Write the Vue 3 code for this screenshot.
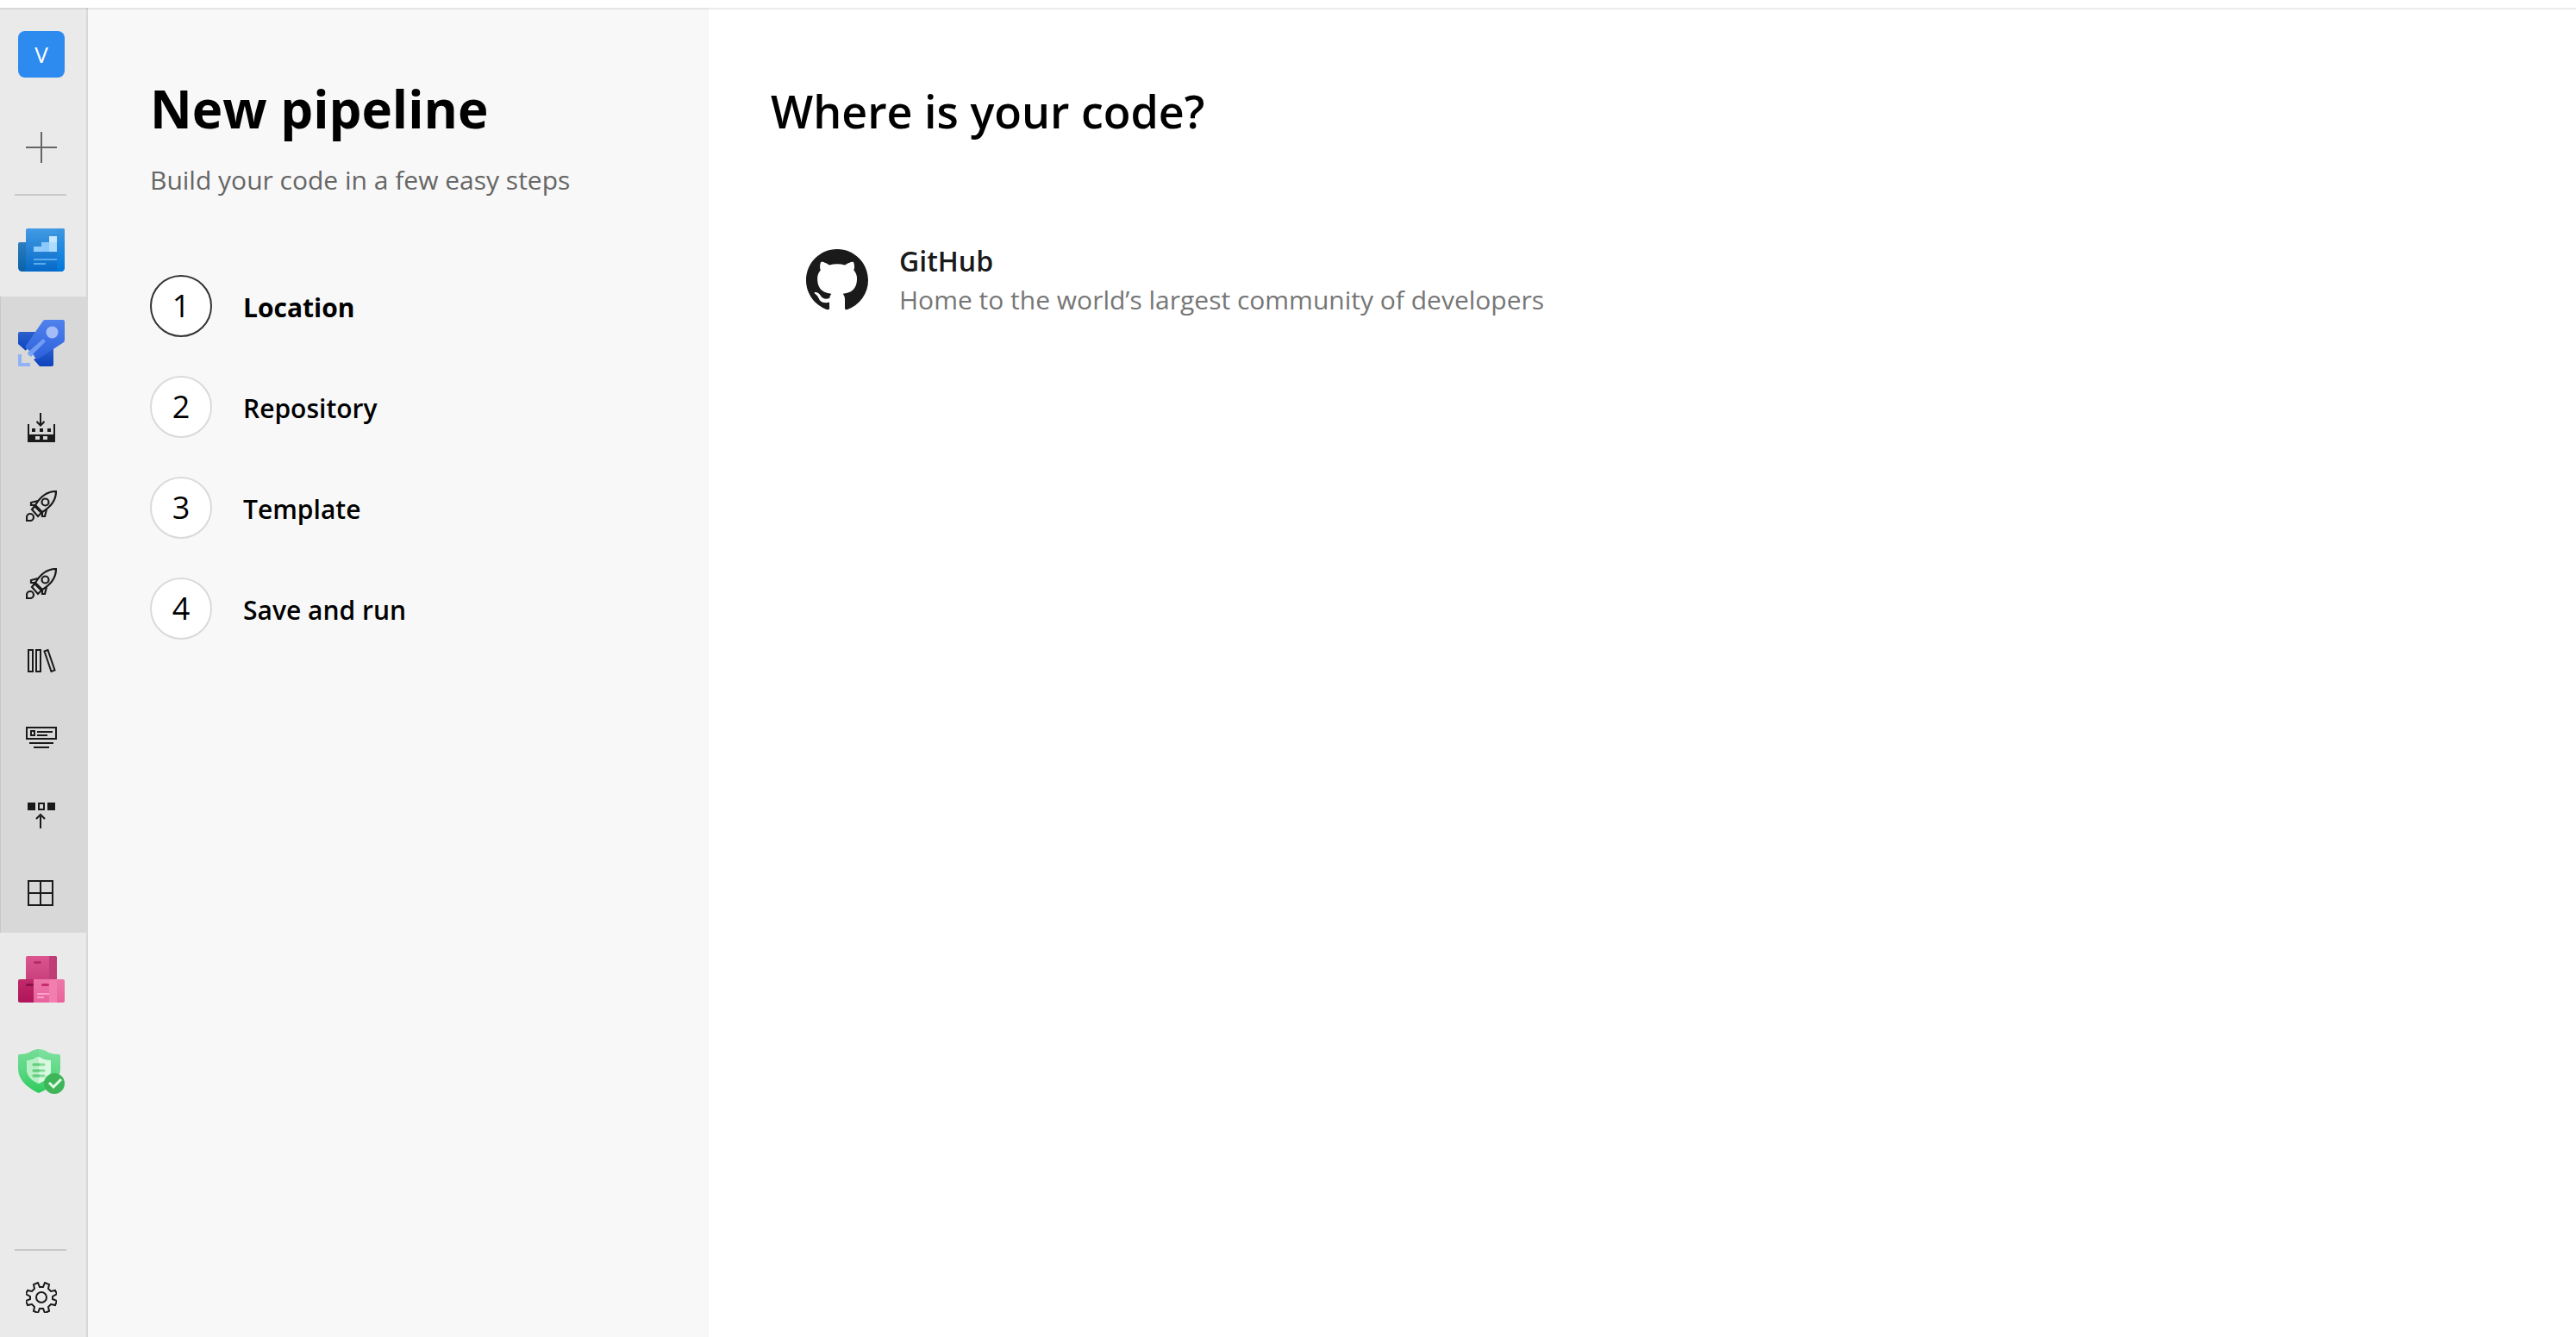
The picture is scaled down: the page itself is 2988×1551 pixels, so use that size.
<script setup>
const steps = ['Location', 'Repository', 'Template', 'Save and run']
const current = 0
</script>

<template>
  <div class="app">
    <header class="topbar"></header>
    <div class="body">
      <nav class="rail" aria-label="Project">
        <a class="item" href="#" aria-label="Project V"><span class="avatar">V</span></a>
        <button class="item" type="button" aria-label="Add">
          <svg width="36" height="36" viewBox="0 0 36 36"><path d="M17 0h2v17h17v2H19v17h-2V19H0v-2h17z" fill="#666" /></svg>
        </button>
        <hr class="rule" />
        <a class="item hub" href="#" aria-label="Boards">
          <svg width="54" height="54" viewBox="0 0 54 54">
            <defs>
              <linearGradient id="b1" x1="0" y1="0" x2="0" y2="1"><stop offset="0" stop-color="#429be4" /><stop offset="1" stop-color="#0669c8" /></linearGradient>
              <linearGradient id="b2" x1="0" y1="0" x2="0" y2="1"><stop offset="0" stop-color="#2d7dc0" /><stop offset="1" stop-color="#0862a8" /></linearGradient>
              <linearGradient id="b3" x1="0" y1="0" x2="0" y2="1"><stop offset="0" stop-color="#3d98e2" /><stop offset="1" stop-color="#0078da" /></linearGradient>
            </defs>
            <path d="M2 18h10v34H5q-5 0-5-5V20q0-2 2-2z" fill="url(#b2)" />
            <path d="M11 2h41q2 0 2 2v43q0 5-5 5H4q5 0 5-5V4q0-2 2-2z" fill="url(#b1)" />
            <path d="M45 2h7q2 0 2 2v43q0 5-4.500 5T45 47z" fill="url(#b3)" />
            <path d="M18 23h9v-5h9v11H18z" fill="#92ccfb" />
            <path d="M27 18h9v11h-9z" fill="#8cc8fa" />
            <path d="M36 11h9v18h-9z" fill="#addbff" />
            <path d="M36 11h9v7h-9z" fill="#c8e6ff" />
            <path d="M18 37h27v2H18zM18 42h14v2H18z" fill="#58acee" />
          </svg>
        </a>
        <div class="group">
          <a class="item" href="#" aria-label="Pipelines">
            <svg width="54" height="54" viewBox="0 0 54 54">
              <defs>
                <linearGradient id="p1" x1="0" y1="0" x2="0" y2="1"><stop offset="0" stop-color="#5082ec" /><stop offset="1" stop-color="#2d61dc" /></linearGradient>
                <linearGradient id="p2" x1="0" y1="0" x2="0" y2="1"><stop offset="0" stop-color="#2c60cc" /><stop offset="1" stop-color="#0c43bd" /></linearGradient>
              </defs>
              <path d="M2 14h20L9 36 0 28V16q0-2 2-2z" fill="url(#p2)" />
              <path d="M41 32v20q0 2-2 2H25l-7-8z" fill="url(#p2)" />
              <path d="M31 0h21q2 0 2 2v21q0 2-1 3L24 45q-2 1-4-1L9 33q-1-1 0-3L29 1q1-1 2-1z" fill="url(#p1)" />
              <path d="M11 34l8 8-3 4-3-3-2-1 1-3-5-2z" fill="#d8d8d8" />
              <path d="M29 22l3 3-17 17-2-2-2-2z" fill="#729cf4" />
              <path d="M11 40l3-3 4 3-3 3z" fill="#7ba3f5" />
              <circle cx="39.500" cy="14.500" r="7" fill="#a4bdf7" />
              <path d="M0 40h4v10h10v4H0z" fill="#92b2f8" />
            </svg>
          </a>
          <a class="item sub" href="#" aria-label="Builds">
            <svg width="36" height="36" viewBox="0 0 36 36" fill="#1a1a1a">
              <path d="M16 0h2v12l3-3 1 2-5 5-5-5 1-2 3 3z" />
              <path fill-rule="evenodd" d="M2 13h2v12h28V13h2v21H2zm9 14v4h5v-4zm9 0v4h5v-4z" />
              <path d="M7 18h4v4H7zM16 18h4v4h-4zM25 18h4v4h-4z" />
            </svg>
          </a>
          <a v-for="label in ['Releases', 'Releases overview']" :key="label" class="item sub" href="#" :aria-label="label">
            <svg width="36" height="36" viewBox="0 0 36 36" fill="none" stroke="#1a1a1a" stroke-width="2.200">
              <path d="M11 17C17 7 24 1 35 1 35 12 29 19 19 25z" />
              <circle cx="22.500" cy="13.500" r="4" />
              <path d="M14 12l-8 2v3h5M24 22l-2 8h-3v-5M11 17l-4 5 7 8 5-5M10 18l8 8" />
              <path d="M1 35v-4a4 4 0 1 1 4 4z" />
            </svg>
          </a>
          <a class="item sub" href="#" aria-label="Library">
            <svg width="36" height="36" viewBox="0 0 36 36" fill="none" stroke="#1a1a1a" stroke-width="2">
              <path d="M3 5h5v25H3zM12 5h5v25h-5zM21.500 6.500l4-1.500 8 23.500-4 1.500z" />
            </svg>
          </a>
          <a class="item sub" href="#" aria-label="Task groups">
            <svg width="36" height="36" viewBox="0 0 36 36" fill="none" stroke="#1a1a1a" stroke-width="2">
              <path d="M1 5h34v13H1zM6 9h4v5H6zM13 10h18M13 14h12M4 23h28M9 28h18" />
            </svg>
          </a>
          <a class="item sub" href="#" aria-label="Deployment groups">
            <svg width="36" height="36" viewBox="0 0 36 36" fill="none" stroke="#1a1a1a" stroke-width="2">
              <path d="M2 2h9v9H2zM25 2h9v9h-9z" fill="#1a1a1a" stroke="none" />
              <path d="M15 3h6v7h-6zM17 32V18M12 21l5-5 5 5" />
            </svg>
          </a>
          <a class="item sub" href="#" aria-label="Dashboards">
            <svg width="36" height="36" viewBox="0 0 36 36" fill="none" stroke="#1a1a1a" stroke-width="2">
              <path d="M3 3h28v28H3zM17 3v28M3 17h28" />
            </svg>
          </a>
        </div>
        <a class="item" href="#" aria-label="Artifacts">
          <svg width="54" height="54" viewBox="0 0 54 54">
            <defs>
              <linearGradient id="a1" x1="0" y1="0" x2="0" y2="1"><stop offset="0" stop-color="#dc5590" /><stop offset="1" stop-color="#c9407d" /></linearGradient>
              <linearGradient id="a2" x1="0" y1="0" x2="0" y2="1"><stop offset="0" stop-color="#c02a6a" /><stop offset="1" stop-color="#b0145a" /></linearGradient>
              <linearGradient id="a3" x1="0" y1="0" x2="0" y2="1"><stop offset="0" stop-color="#ed77a9" /><stop offset="1" stop-color="#e8629c" /></linearGradient>
            </defs>
            <path d="M11 0h32q2 0 2 2v25H9V2q0-2 2-2z" fill="url(#a1)" />
            <path d="M36 0h7q2 0 2 2v25h-9z" fill="#c03c76" />
            <path d="M2 27h16v27H2q-2 0-2-2V29q0-2 2-2z" fill="url(#a2)" />
            <path d="M18 27h34q2 0 2 2v23q0 2-2 2H18z" fill="url(#a3)" />
            <path d="M36 27h9v27h-9z" fill="#f27eb0" />
            <rect x="18" y="6" width="9" height="3" rx="1.500" fill="#b52c68" />
            <rect x="9" y="32" width="9" height="3" rx="1.500" fill="#8e104a" />
            <rect x="27" y="32" width="9" height="3" rx="1.500" fill="#c42f70" />
            <path d="M22 43h14v2H22zM22 47h8v2h-8z" fill="#fba0c8" />
          </svg>
        </a>
        <a class="item" href="#" aria-label="Compliance">
          <svg width="54" height="54" viewBox="0 0 54 54">
            <defs>
              <linearGradient id="s1" x1="0" y1="0" x2="0" y2="1"><stop offset="0" stop-color="#80e0a0" /><stop offset=".5" stop-color="#5fda86" /><stop offset="1" stop-color="#2ccb5c" /></linearGradient>
            </defs>
            <path d="M0 8q0-2 2-2 9 0 14-4 8-4 16 0 5 4 15 4 2 0 2 2v14c0 15-13 24-25 29C13 46 0 37 0 22z" fill="url(#s1)" />
            <path d="M0 8q0-2 2-2 9 0 14-4 4-2 8-2v51C13 46 0 37 0 22z" fill="#36c865" opacity=".15" />
            <path d="M10 13q6 0 9-2 5-4 9 0 4 2 10 2v13c0 7-7 11-14 14-7-3-14-8-14-17z" fill="#d8f8df" />
            <path d="M10 13q6 0 9-2 2-2 5-2v31c-7-3-14-8-14-17z" fill="#b9efc6" />
            <path d="M18 18h12M18 25h12M18 31h12" stroke="#85dc98" stroke-width="3" stroke-linecap="round" />
            <path d="M18 18h6M18 25h6M18 31h6" stroke="#65cd80" stroke-width="3" stroke-linecap="round" />
            <circle cx="42" cy="40" r="12" fill="#3fb55a" />
            <path d="M36 39l5 5 9-9" fill="none" stroke="#e2fbe6" stroke-width="3" />
          </svg>
        </a>
        <div class="spacer"></div>
        <hr class="rule" />
        <button class="item settings" type="button" aria-label="Project settings">
          <svg width="36" height="36" viewBox="0 0 36 36" fill="none" stroke="#1a1a1a" stroke-width="2">
            <path d="M14 1l2 5h4l2-5 5 2-1 5 3 3 5-1 2 4-5 3v3l5 2-2 5-5-1-3 3 1 5-5 2-2-5h-4l-2 5-5-2 1-5-3-3-5 1-2-5 5-2v-3l-5-3 2-4 5 1 3-3-1-5z" />
            <circle cx="18" cy="18" r="6" />
          </svg>
        </button>
      </nav>

      <aside class="wizard">
        <h1>New pipeline</h1>
        <p class="tagline">Build your code in a few easy steps</p>
        <ol class="steps">
          <li v-for="(step, i) in steps" :key="step" :class="{ current: i === current }">
            <span class="num">{{ i + 1 }}</span>
            <span class="label">{{ step }}</span>
          </li>
        </ol>
      </aside>

      <main class="content">
        <h2>Where is your code?</h2>
        <a class="source" href="#">
          <svg width="72" height="72" viewBox="0 0 16 16" aria-hidden="true">
            <path fill="#1a1a1a" d="M8 0C3.580 0 0 3.580 0 8c0 3.540 2.290 6.530 5.470 7.590.4.070.55-.17.55-.38 0-.19-.01-.82-.01-1.490-2.010.37-2.530-.49-2.690-.94-.09-.23-.48-.94-.82-1.130-.28-.15-.68-.52-.01-.53.63-.01 1.080.58 1.230.82.72 1.210 1.870.87 2.330.66.07-.52.28-.87.51-1.070-1.780-.2-3.640-.89-3.640-3.950 0-.87.31-1.590.82-2.150-.08-.2-.36-1.020.08-2.120 0 0 .67-.21 2.200.82.64-.18 1.320-.27 2-.27s1.360.09 2 .27c1.530-1.040 2.200-.82 2.200-.82.44 1.100.16 1.920.08 2.120.51.56.82 1.270.82 2.150 0 3.070-1.870 3.750-3.650 3.950.29.25.54.73.54 1.480 0 1.070-.01 1.930-.01 2.200 0 .21.15.46.55.38A8.010 8.010 0 0 0 16 8c0-4.420-3.580-8-8-8z" />
          </svg>
          <span class="source-text">
            <span class="source-name">GitHub</span>
            <span class="source-desc">Home to the world’s largest community of developers</span>
          </span>
        </a>
      </main>
    </div>
  </div>
</template>

<style>
body {
  margin: 0;
}
</style>

<style scoped>
.app {
  display: flex;
  flex-direction: column;
  min-height: 100vh;
  background: #fff;
  color: #000;
  font-family: "Open Sans", "Noto Sans", sans-serif;
}
.topbar {
  position: relative;
  height: 9px;
  background: #fff;
  box-shadow: 0 2px 0 rgba(0, 0, 0, 0.08);
}
.body {
  display: flex;
  flex: 1;
}
.rail {
  display: flex;
  flex-direction: column;
  flex: none;
  width: 100px;
  background: #eaeaea;
  border-right: 2px solid #d8d8d8;
}
.item {
  display: flex;
  align-items: center;
  justify-content: center;
  box-sizing: border-box;
  flex: none;
  width: 96px;
  height: 108px;
  padding: 0;
  border: 0;
  background: none;
  color: inherit;
  text-decoration: none;
}
.item svg {
  display: block;
}
.sub {
  height: 90px;
}
.settings {
  height: 100px;
  padding-top: 8px;
}
.avatar {
  width: 54px;
  height: 54px;
  border-radius: 8px;
  background: #2d8bf0;
  color: #fff;
  font-size: 26px;
  line-height: 54px;
  text-align: center;
}
.rule {
  flex: none;
  width: 60px;
  height: 2px;
  margin: 0 0 0 17px;
  border: 0;
  background: #c8c8c8;
}
.hub {
  margin-top: 9px;
}
.group {
  background: #d8d8d8;
  box-shadow: inset 1px 0 0 #c8c8c8;
}
.spacer {
  flex: 1;
}
.wizard {
  box-sizing: border-box;
  flex: none;
  width: 720px;
  padding: 75px 72px 0;
  background: #f8f8f8;
}
h1 {
  margin: 0;
  font-size: 60px;
  line-height: 84px;
  font-weight: 700;
}
.tagline {
  margin: 21px 0 0;
  color: #666;
  font-size: 30px;
  line-height: 40px;
}
.steps {
  display: flex;
  flex-direction: column;
  gap: 45px;
  margin: 90px 0 0;
  padding: 0;
  list-style: none;
}
.steps li {
  display: flex;
  align-items: center;
  gap: 36px;
  height: 72px;
}
.num {
  box-sizing: border-box;
  width: 72px;
  height: 72px;
  border: 2px solid #dadada;
  border-radius: 50%;
  background: #fff;
  font-size: 36px;
  line-height: 68px;
  text-align: center;
}
.label {
  padding-top: 3px;
  font-size: 30px;
  line-height: 40px;
  font-weight: 600;
}
.current .num {
  border-color: #333;
}
.current .label {
  font-weight: 700;
}
.content {
  flex: 1;
  padding: 78px 72px 0;
}
h2 {
  margin: 0;
  font-size: 52px;
  line-height: 84px;
  font-weight: 600;
}
.source {
  display: flex;
  align-items: center;
  gap: 36px;
  margin-top: 109px;
  padding-left: 41px;
  color: #1a1a1a;
  text-decoration: none;
}
.source-text {
  display: flex;
  flex-direction: column;
}
.source-name {
  font-size: 32px;
  line-height: 45px;
  font-weight: 600;
}
.source-desc {
  color: #767676;
  font-size: 30px;
  line-height: 45px;
}
</style>
